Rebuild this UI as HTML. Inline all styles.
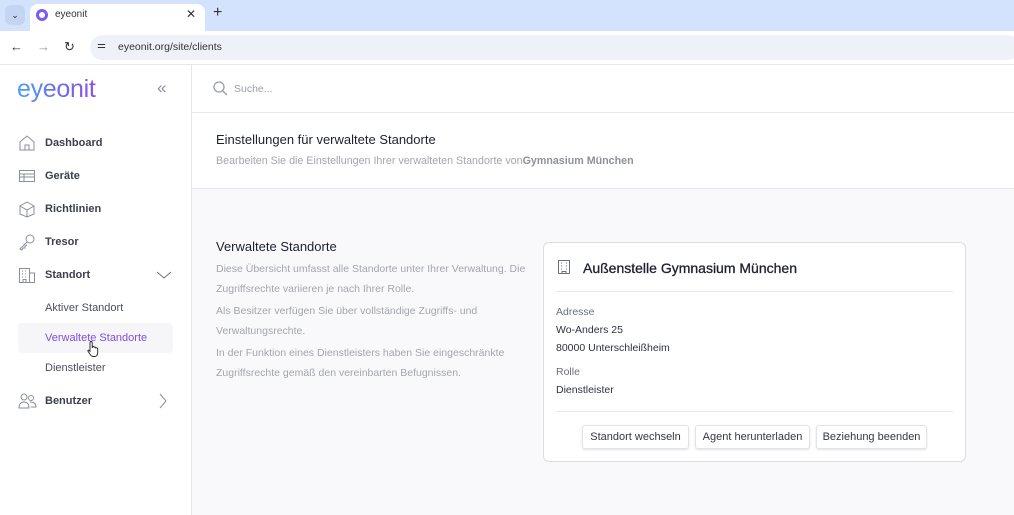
<!DOCTYPE html>
<html><head><meta charset="utf-8"><style>
*{margin:0;padding:0;box-sizing:border-box}
body{width:1014px;height:515px;overflow:hidden;font-family:"Liberation Sans",sans-serif;background:#fff;position:relative;color:#1f2430}
.abs{position:absolute}
.tabbar{left:0;top:0;width:1014px;height:31px;background:#d3e3fd}
.tab{left:30px;top:4px;width:175px;height:27px;background:#fff;border-radius:8px 8px 0 0}
.addr{left:0;top:31px;width:1014px;height:34px;background:#fff;border-bottom:1px solid #e3e6ea}
.url{left:90px;top:35px;width:930px;height:25px;background:#eef1f7;border-radius:13px}
.side{left:0;top:65px;width:192px;height:450px;border-right:1px solid #e6e7ea;background:#fff}
.nav{position:absolute;left:45px;font-size:11px;font-weight:bold;color:#3a3f4c}
.sub{position:absolute;left:45px;font-size:11px;color:#4a4f5c}
.ic{position:absolute;left:18px}
.muted{color:#a3a6ae;font-size:10.5px;line-height:19.5px}
.btn{position:absolute;top:425px;height:24px;background:#fff;border:1px solid #e3e4e8;border-radius:3px;box-shadow:0 1px 2px rgba(0,0,0,.12);font-size:11px;color:#333844;line-height:22px;text-align:center}
</style></head><body>
<div class="abs tabbar"></div>
<div class="abs" style="left:5px;top:5px;width:20px;height:20px;background:#c4d5f3;border-radius:6px;font-size:9px;text-align:center;line-height:20px">&#8964;</div>
<div class="abs tab"></div>
<div class="abs" style="left:36px;top:9px;width:12px;height:12px;border-radius:50%;border:3px solid #7b5cf0"></div>
<div class="abs" style="left:55px;top:9px;font-size:10px;color:#333">eyeonit</div>
<div class="abs" style="left:186px;top:7px;font-size:12px;color:#333">✕</div>
<div class="abs" style="left:213px;top:4px;font-size:16px;color:#333">+</div>
<div class="abs addr"></div>
<div class="abs url"></div>
<div class="abs" style="left:10px;top:39px;font-size:13px;color:#333">←</div>
<div class="abs" style="left:37px;top:39px;font-size:13px;color:#999">→</div>
<div class="abs" style="left:64px;top:39px;font-size:13px;color:#333">↻</div>
<div class="abs" style="left:97px;top:40px;font-size:10px;color:#333">⚌</div>
<div class="abs" style="left:118px;top:41px;font-size:10.5px;color:#333">eyeonit.org/site/clients</div>
<div class="abs side"></div>
<div class="abs" style="left:17px;top:75px;font-size:25px;font-weight:normal;letter-spacing:-0.3px;background:linear-gradient(90deg,#4aa3f0,#6a6ef0,#8a50e6);-webkit-background-clip:text;color:transparent">eyeonit</div>
<div class="abs" style="left:157px;top:78px;font-size:17px;color:#8d92a0">«</div>
<svg class="ic" style="top:135px" width="18" height="16" viewBox="0 0 18 16" fill="none" stroke="#8a8f9b" stroke-width="1"><path d="M2 7L9 1l7 6v8H2z M7 15v-5h4v5"/></svg>
<div class="nav" style="top:137px">Dashboard</div>
<svg class="ic" style="top:169px" width="18" height="14" fill="none" stroke="#8a8f9b"><rect x="1.5" y="1.5" width="15" height="11"/><path d="M1.5 5h15M1.5 8h15M6 5v7.5"/></svg>
<div class="nav" style="top:170px">Geräte</div>
<svg class="ic" style="top:201px" width="18" height="17" fill="none" stroke="#8a8f9b"><path d="M9 1l7 4v8l-7 3-7-3V5zM2 5l7 4 7-4M9 9v7"/></svg>
<div class="nav" style="top:203px">Richtlinien</div>
<svg class="ic" style="top:234px" width="18" height="17" fill="none" stroke="#8a8f9b"><circle cx="12" cy="5" r="4"/><path d="M9 8l-7 7 2 1 1-2 2 0 0-2 2-1"/></svg>
<div class="nav" style="top:236px">Tresor</div>
<svg class="ic" style="top:267px" width="18" height="17" fill="none" stroke="#8a8f9b"><rect x="1.5" y="1.5" width="10" height="14"/><path d="M11.5 6h5v9.5h-5M4 4h1M7 4h1M4 7h1M7 7h1M4 10h1M7 10h1M5 15.5v-3h3v3"/></svg>
<div class="nav" style="top:269px">Standort</div>
<svg class="abs" style="left:156px;top:270px" width="16" height="10" fill="none" stroke="#6b7080"><path d="M1 2l7 6 7-6"/></svg>
<div class="sub" style="top:302px">Aktiver Standort</div>
<div class="abs" style="left:18px;top:323px;width:155px;height:30px;background:#f6f6f9;border-radius:4px"></div>
<div class="sub" style="top:332px;color:#7b4fe0">Verwaltete Standorte</div>
<svg class="abs" style="left:87px;top:340px" width="14" height="18" fill="#fff" stroke="#222" stroke-width="0.9"><path d="M4 1.5c.8 0 1.2.5 1.2 1.2V8l.3-1.5c.9-.4 1.7 0 1.7.8.8-.5 1.7-.1 1.7.7.8-.4 1.8 0 1.8.9v3.8c0 2-1.2 3.8-3 3.8H6c-1.5 0-2.2-1-3-2.2L1 11.3c-.4-.7.3-1.5 1-1l1 1V2.7C3 2 3.3 1.5 4 1.5z"/></svg>
<div class="sub" style="top:362px">Dienstleister</div>
<svg class="ic" style="top:393px" width="20" height="16" fill="none" stroke="#8a8f9b"><circle cx="6" cy="4" r="3"/><path d="M1 15c0-4 2-6 5-6s5 2 5 6z"/><circle cx="13" cy="5" r="2.5"/><path d="M12 9c3 0 6 1 6 5h-5"/></svg>
<div class="nav" style="top:395px">Benutzer</div>
<svg class="abs" style="left:158px;top:393px" width="10" height="16" fill="none" stroke="#8a8f9b"><path d="M2 1l6 7-6 7"/></svg>
<!-- main -->
<div class="abs" style="left:192px;top:112px;width:822px;height:1px;background:#e8e9ec"></div>
<svg class="abs" style="left:213px;top:81px" width="15" height="15" fill="none" stroke="#9a9ea8" stroke-width="1.3"><circle cx="6" cy="6" r="5"/><path d="M10 10l4 4"/></svg>
<div class="abs" style="left:234px;top:83px;font-size:10.5px;color:#9a9ea8">Suche...</div>
<div class="abs" style="left:216px;top:132px;font-size:13px;color:#1c2130">Einstellungen für verwaltete Standorte</div>
<div class="abs muted" style="left:216px;top:152px;font-size:10.7px">Bearbeiten Sie die Einstellungen Ihrer verwalteten Standorte von<b style="color:#8d919b">Gymnasium München</b></div>
<div class="abs" style="left:192px;top:188px;width:822px;height:327px;background:#f9f9fb;border-top:1px solid #e6e7ea"></div>
<div class="abs" style="left:216px;top:239px;font-size:13px;color:#1c2130">Verwaltete Standorte</div>
<div class="abs muted" style="left:216px;top:260px;width:320px">Diese Übersicht umfasst alle Standorte unter Ihrer Verwaltung. Die Zugriffsrechte variieren je nach Ihrer Rolle.</div>
<div class="abs muted" style="left:216px;top:302px;width:300px">Als Besitzer verfügen Sie über vollständige Zugriffs- und Verwaltungsrechte.</div>
<div class="abs muted" style="left:216px;top:344px;width:320px">In der Funktion eines Dienstleisters haben Sie eingeschränkte Zugriffsrechte gemäß den vereinbarten Befugnissen.</div>
<div class="abs" style="left:543px;top:242px;width:423px;height:220px;background:#fff;border:1px solid #dcdde1;border-radius:6px"></div>
<svg class="abs" style="left:557px;top:259px" width="14" height="16" fill="none" stroke="#6b7080"><rect x="1.5" y="1.5" width="11" height="13"/><path d="M4 4h1M9 4h1M4 7h1M9 7h1M4 10h1M9 10h1M5 14.5v-2h4v2"/></svg>
<div class="abs" style="left:583px;top:260px;font-size:14px;color:#1c2130;-webkit-text-stroke:0.3px #1c2130">Außenstelle Gymnasium München</div>
<div class="abs" style="left:556px;top:291px;width:397px;height:1px;background:#e6e7ea"></div>
<div class="abs" style="left:556px;top:306px;font-size:10.5px;color:#6b7080">Adresse</div>
<div class="abs" style="left:556px;top:324px;font-size:10.5px;color:#2d3240">Wo-Anders 25</div>
<div class="abs" style="left:556px;top:342px;font-size:10.5px;color:#2d3240">80000 Unterschleißheim</div>
<div class="abs" style="left:556px;top:366px;font-size:10.5px;color:#6b7080">Rolle</div>
<div class="abs" style="left:556px;top:384px;font-size:10.5px;color:#2d3240">Dienstleister</div>
<div class="abs" style="left:556px;top:411px;width:397px;height:1px;background:#e6e7ea"></div>
<div class="btn" style="left:582px;width:107px">Standort wechseln</div>
<div class="btn" style="left:695px;width:115px">Agent herunterladen</div>
<div class="btn" style="left:816px;width:111px">Beziehung beenden</div>
</body></html>
